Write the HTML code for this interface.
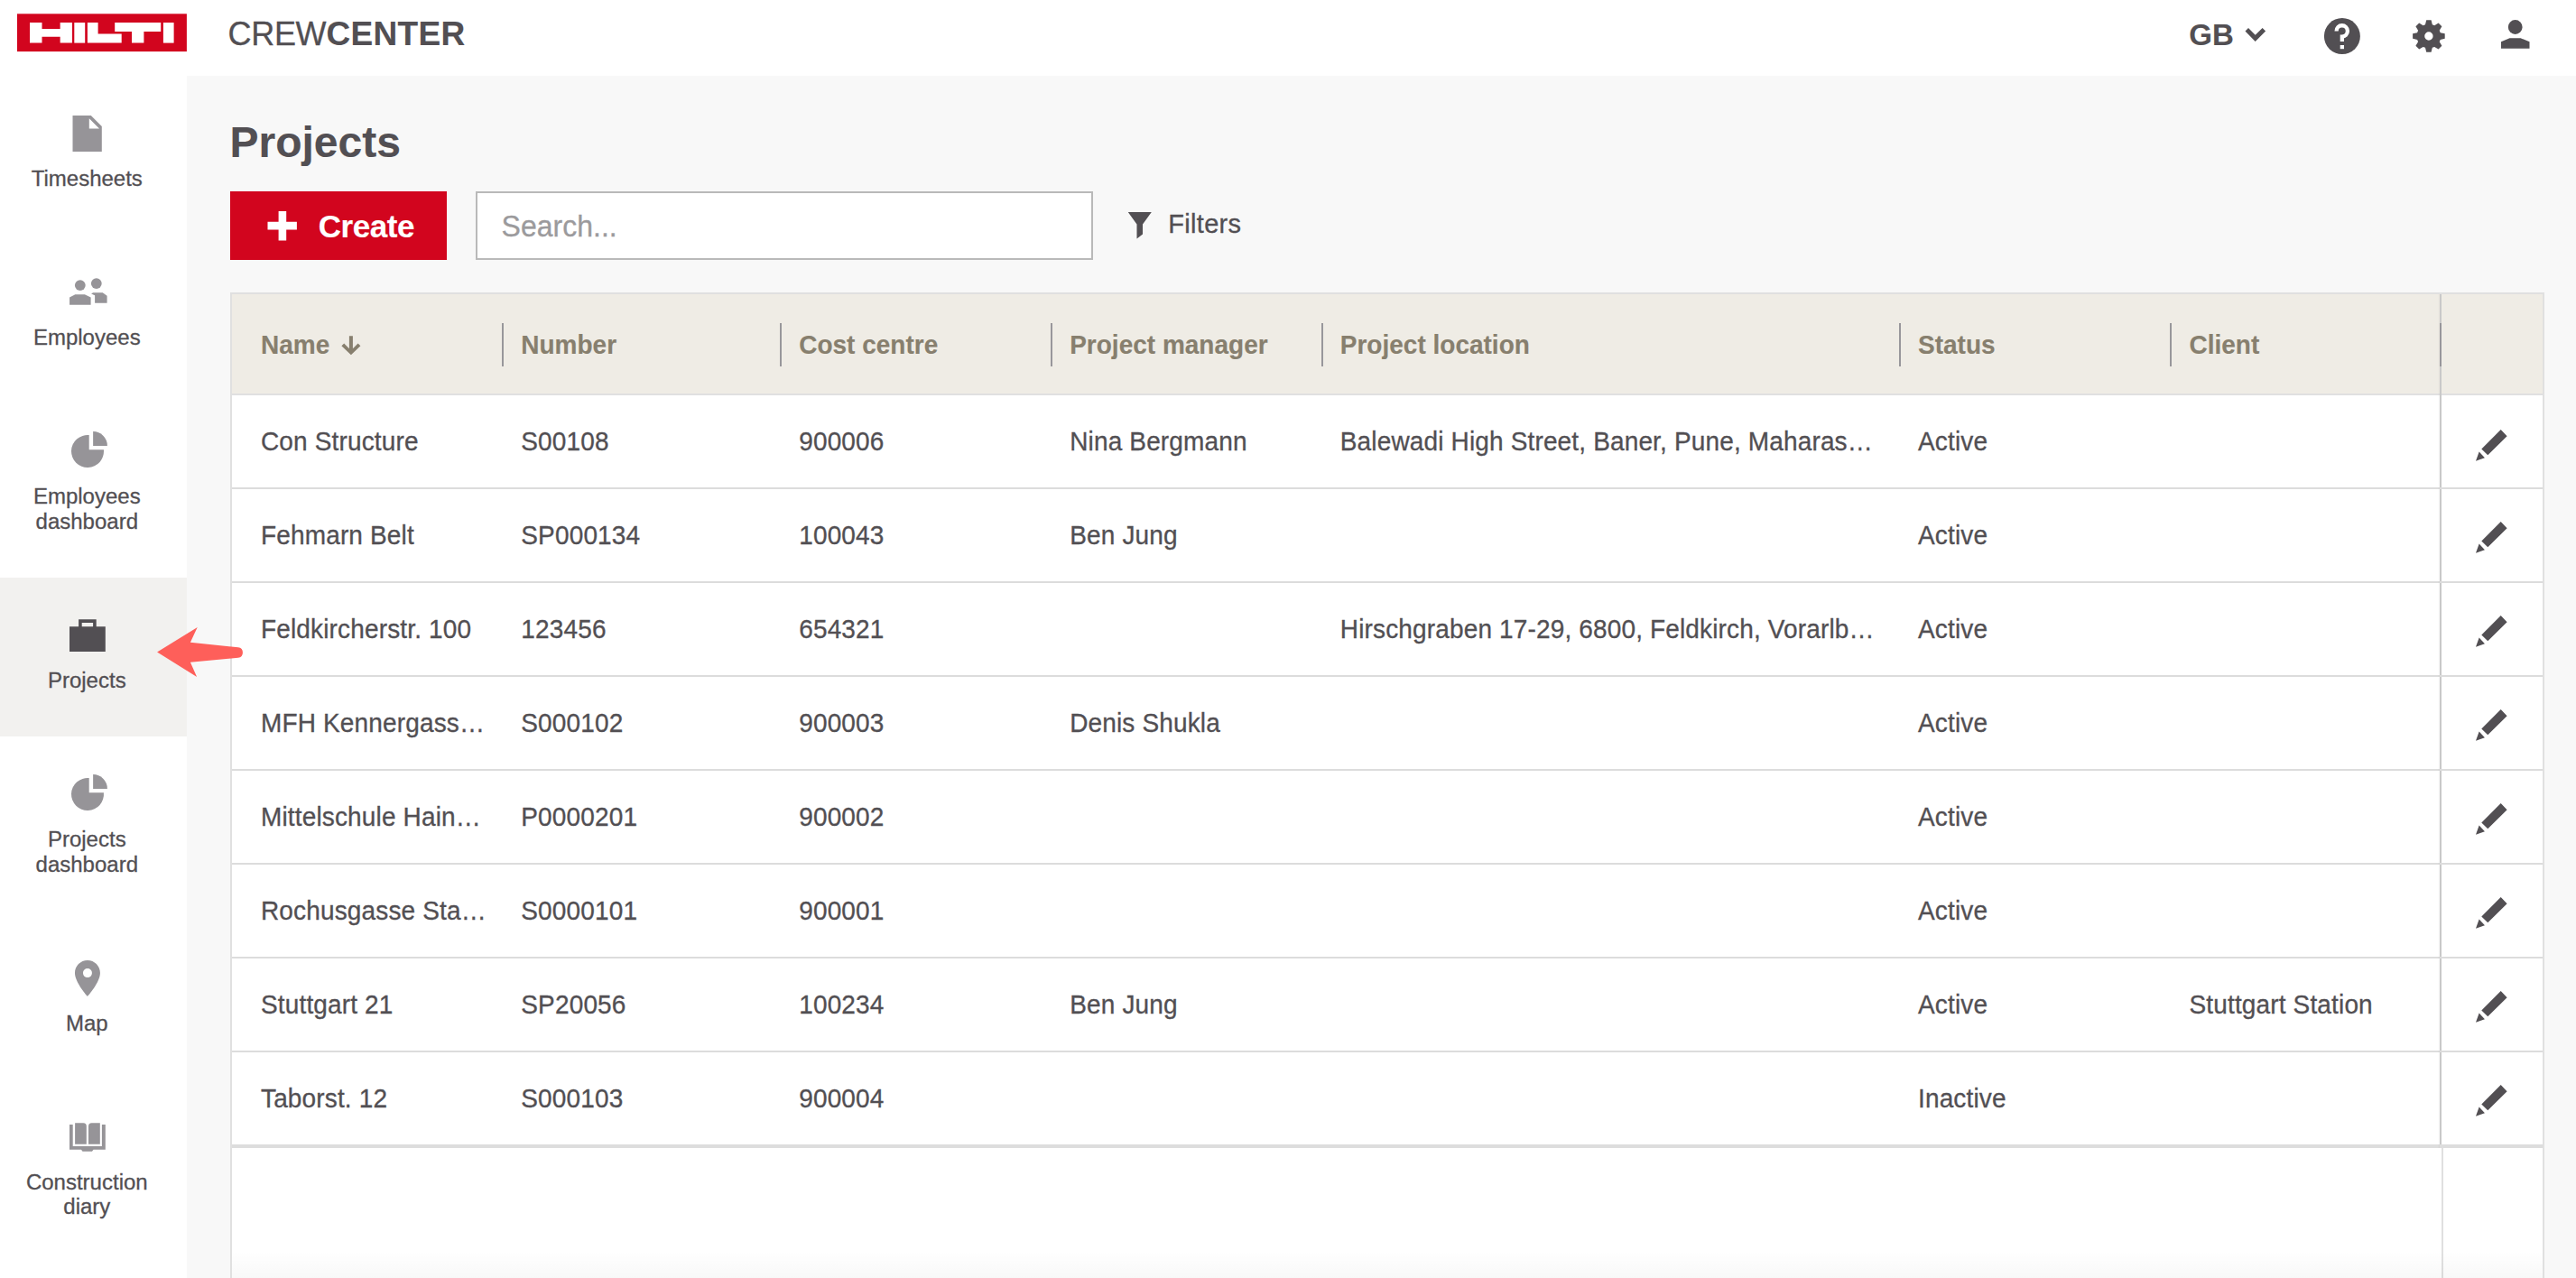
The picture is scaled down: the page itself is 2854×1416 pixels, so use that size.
<!DOCTYPE html>
<html><head><meta charset="utf-8"><title>Projects - CrewCenter</title>
<style>
html,body{margin:0;padding:0;}
body{width:2854px;height:1416px;position:relative;overflow:hidden;background:#f8f8f8;font-family:"Liberation Sans",sans-serif;}
.t{position:absolute;line-height:1;white-space:pre;-webkit-text-stroke:0.3px currentColor;}
.b{-webkit-text-stroke:0.15px currentColor;}
.r{position:absolute;}
svg{position:absolute;overflow:visible;}
</style></head><body>
<div class="r" style="left:0px;top:0px;width:2854px;height:84px;background:#ffffff;"></div>
<div class="r" style="left:0px;top:84px;width:207px;height:1332px;background:#ffffff;"></div>
<div class="r" style="left:0px;top:640px;width:207px;height:176px;background:#f2f1ef;"></div>
<svg style="left:0;top:0" width="2854" height="84" viewBox="0 0 2854 84">
<rect x="19" y="15.3" width="187.9" height="41.8" fill="#d2051e"/>
<g fill="#ffffff" transform="translate(19 15.3)">
<path d="M14 9.75H27.5V16.7H47.65V9.75H60.9V32.3H47.65V25.5H27.5V32.3H14Z"/>
<path d="M63.3 9.75H75.2V32.3H63.3Z"/>
<path d="M77.9 9.75H89.6V22.3H115.7V32.3H77.9Z"/>
<path d="M108.2 9.75H159.2V19.6H140.4V32.3H127V19.6H108.2Z"/>
<path d="M161.9 9.75H173.6V32.3H161.9Z"/>
</g>
<g fill="#524f53">
<polygon points="2487.5,34.6 2491,31.1 2498.7,38.8 2506.6,31.1 2510.1,34.6 2498.7,45.9"/>
<circle cx="2594.9" cy="40.1" r="20"/>
<circle cx="2786.7" cy="30" r="7.9"/>
<polygon points="2771,46.3 2780.5,42.3 2792.6,42.3 2802.5,46.3 2802.5,53.75 2771,53.75"/>
</g>
<path d="M2588.6 34.4 A6.15 6.15 0 1 1 2594.85 40.55 V45.9" fill="none" stroke="#fff" stroke-width="4.3"/>
<rect x="2592.7" y="50" width="4.3" height="4.2" fill="#fff"/>
<path d="M2686.98 27.24 L2688.21 22.25 L2693.59 22.25 L2694.82 27.24 L2697.19 28.22 L2701.58 25.56 L2705.39 29.37 L2702.73 33.76 L2703.71 36.13 L2708.70 37.36 L2708.70 42.74 L2703.71 43.97 L2702.73 46.34 L2705.39 50.73 L2701.58 54.54 L2697.19 51.88 L2694.82 52.86 L2693.59 57.85 L2688.21 57.85 L2686.98 52.86 L2684.61 51.88 L2680.22 54.54 L2676.41 50.73 L2679.07 46.34 L2678.09 43.97 L2673.10 42.74 L2673.10 37.36 L2678.09 36.13 L2679.07 33.76 L2676.41 29.37 L2680.22 25.56 L2684.61 28.22Z M2695.60 40.05 A4.7 4.7 0 1 0 2686.20 40.05 A4.7 4.7 0 1 0 2695.60 40.05Z" fill="#524f53" fill-rule="evenodd"/>
</svg>
<div class="t" style="left:252.50px;top:19.83px;font-size:36px;font-weight:400;color:#524f53;letter-spacing:-0.3px;">CREW</div>
<div class="t b" style="left:361.50px;top:18.98px;font-size:37px;font-weight:700;color:#524f53;letter-spacing:0.3px;">CENTER</div>
<div class="t b" style="left:2425.30px;top:21.97px;font-size:33px;font-weight:700;color:#524f53;">GB</div>
<div class="t" style="left:0;width:192.6px;text-align:center;top:185.93px;font-size:24px;color:#524f53;transform-origin:0 20.32px;transform:scaleY(1.03)">Timesheets</div>
<div class="t" style="left:0;width:192.6px;text-align:center;top:361.58px;font-size:24px;color:#524f53;transform-origin:0 20.32px;transform:scaleY(1.03)">Employees</div>
<div class="t" style="left:0;width:192.6px;text-align:center;top:537.98px;font-size:24px;color:#524f53;transform-origin:0 20.32px;transform:scaleY(1.03)">Employees</div>
<div class="t" style="left:0;width:192.6px;text-align:center;top:565.78px;font-size:24px;color:#524f53;transform-origin:0 20.32px;transform:scaleY(1.03)">dashboard</div>
<div class="t" style="left:0;width:192.6px;text-align:center;top:741.98px;font-size:24px;color:#524f53;transform-origin:0 20.32px;transform:scaleY(1.03)">Projects</div>
<div class="t" style="left:0;width:192.6px;text-align:center;top:917.68px;font-size:24px;color:#524f53;transform-origin:0 20.32px;transform:scaleY(1.03)">Projects</div>
<div class="t" style="left:0;width:192.6px;text-align:center;top:945.68px;font-size:24px;color:#524f53;transform-origin:0 20.32px;transform:scaleY(1.03)">dashboard</div>
<div class="t" style="left:0;width:192.6px;text-align:center;top:1122.48px;font-size:24px;color:#524f53;transform-origin:0 20.32px;transform:scaleY(1.03)">Map</div>
<div class="t" style="left:0;width:192.6px;text-align:center;top:1298.28px;font-size:24px;color:#524f53;transform-origin:0 20.32px;transform:scaleY(1.03)">Construction</div>
<div class="t" style="left:0;width:192.6px;text-align:center;top:1325.08px;font-size:24px;color:#524f53;transform-origin:0 20.32px;transform:scaleY(1.03)">diary</div>
<svg style="left:0;top:0" width="207" height="1416" viewBox="0 0 207 1416">
<path fill="#969498" fill-rule="evenodd" d="M80.5 128H100.8L112.8 140V168H80.5Z M98.8 131.25V142.5H110Z"/>
<g fill="#969498">
<circle cx="88.8" cy="316.1" r="5.9"/>
<circle cx="106.8" cy="314.1" r="5.9"/>
<polygon points="77.07,329.4 83.3,326.2 93.9,326.2 100.6,329.6 100.6,337.8 77.07,337.8"/>
<polygon points="101.07,325.4 103.2,324.2 113.7,324.2 118.6,327.7 118.6,335.7 105.1,335.7 105.1,327.3"/>
</g>
<g fill="#969498" transform="translate(0 0)"><path d="M98.7 482.08 A18 18 0 1 0 114.92 498.3 L98.7 498.3 Z"/><path d="M103.1 478.1 A15.8 15.8 0 0 1 118.9 493.9 L103.1 493.9 Z"/></g>
<g fill="#969498" transform="translate(0 380)"><path d="M98.7 482.08 A18 18 0 1 0 114.92 498.3 L98.7 498.3 Z"/><path d="M103.1 478.1 A15.8 15.8 0 0 1 118.9 493.9 L103.1 493.9 Z"/></g>
<path fill="#524f53" fill-rule="evenodd" d="M87.1 686.2H106.7V694.2H116.8V721.9H77V694.2H87.1Z M90.7 689.9V694.2H103.1V689.9Z"/>
<path fill="#969498" fill-rule="evenodd" d="M96.95 1064.1C89.2 1064.1 82.95 1070.35 82.95 1078.1C82.95 1088.6 96.95 1104.1 96.95 1104.1S110.95 1088.6 110.95 1078.1C110.95 1070.35 104.7 1064.1 96.95 1064.1Z M96.95 1073.1A5 5 0 1 0 96.95 1083.1A5 5 0 1 0 96.95 1073.1Z"/>
<g fill="#969498">
<path d="M77 1246.1H80.7V1270.1H112.9V1246.1H116.8V1273.8H103.5L102 1275.8H91.5L90 1273.8H77Z"/>
<path d="M83.1 1244.2H92.3Q95.8 1244.2 95.8 1247.7V1267.8H83.1Z"/>
<path d="M110.8 1244.2H101.5Q98 1244.2 98 1247.7V1267.8H110.8Z"/>
</g>
</svg>
<div class="t b" style="left:254.50px;top:133.57px;font-size:48px;font-weight:700;color:#524f53;">Projects</div>
<div class="r" style="left:255px;top:212px;width:240px;height:76px;background:#d2051e;"></div>
<svg style="left:0;top:0" width="500" height="300" viewBox="0 0 500 300"><path fill="#fff" d="M308.6 233.9H317.2V245.7H328.9V254.5H317.2V266.4H308.6V254.5H296.5V245.7H308.6Z"/></svg>
<div class="t b" style="left:352.80px;top:232.77px;font-size:35px;font-weight:700;color:#ffffff;letter-spacing:-0.45px;">Create</div>
<div class="r" style="left:527px;top:212px;width:684px;height:76px;background:#ffffff;box-sizing:border-box;border:2px solid #b9b9b9;"></div>
<div class="t" style="left:555.60px;top:235.11px;font-size:32px;font-weight:400;color:#9b9a9c;transform-origin:0 27.09px;transform:scaleY(1.06);">Search...</div>
<svg style="left:0;top:0" width="1300" height="300" viewBox="0 0 1300 300"><path fill="#524f53" d="M1249.8 234.9H1275.8L1266 248.6V259.4L1259.5 264.4V248.6Z"/></svg>
<div class="t" style="left:1294.30px;top:234.25px;font-size:29px;font-weight:400;color:#524f53;letter-spacing:0.3px;">Filters</div>
<div class="r" style="left:255px;top:324px;width:2564px;height:1092px;background:#ffffff;box-sizing:border-box;border:2px solid #e0e0e0;border-bottom:0;"></div>
<div class="r" style="left:257px;top:326px;width:2560px;height:110px;background:#efece5;"></div>
<div class="r" style="left:257px;top:436px;width:2560px;height:2px;background:#e0e0e0;"></div>
<div class="r" style="left:2703px;top:326px;width:2px;height:946px;background:#c9c9c9;"></div>
<div class="r" style="left:2705px;top:1272px;width:2px;height:144px;background:#e0e0e0;"></div>
<div class="r" style="left:556px;top:358px;width:2px;height:48px;background:#98979b;"></div>
<div class="r" style="left:864px;top:358px;width:2px;height:48px;background:#98979b;"></div>
<div class="r" style="left:1164px;top:358px;width:2px;height:48px;background:#98979b;"></div>
<div class="r" style="left:1464px;top:358px;width:2px;height:48px;background:#98979b;"></div>
<div class="r" style="left:2104px;top:358px;width:2px;height:48px;background:#98979b;"></div>
<div class="r" style="left:2404px;top:358px;width:2px;height:48px;background:#98979b;"></div>
<div class="r" style="left:2703px;top:358px;width:2px;height:48px;background:#98979b;"></div>
<div class="r" style="left:257px;top:540px;width:2560px;height:2px;background:#dcdcdc;"></div>
<div class="r" style="left:257px;top:644px;width:2560px;height:2px;background:#dcdcdc;"></div>
<div class="r" style="left:257px;top:748px;width:2560px;height:2px;background:#dcdcdc;"></div>
<div class="r" style="left:257px;top:852px;width:2560px;height:2px;background:#dcdcdc;"></div>
<div class="r" style="left:257px;top:956px;width:2560px;height:2px;background:#dcdcdc;"></div>
<div class="r" style="left:257px;top:1060px;width:2560px;height:2px;background:#dcdcdc;"></div>
<div class="r" style="left:257px;top:1164px;width:2560px;height:2px;background:#dcdcdc;"></div>
<div class="r" style="left:257px;top:1268px;width:2560px;height:4px;background:#dddddd;"></div>
<div class="t b" style="left:289.00px;top:368.50px;font-size:28px;font-weight:700;color:#877f6e;transform-origin:0 23.70px;transform:scaleY(1.04);">Name</div>
<div class="t b" style="left:577.30px;top:368.50px;font-size:28px;font-weight:700;color:#877f6e;transform-origin:0 23.70px;transform:scaleY(1.04);">Number</div>
<div class="t b" style="left:885.20px;top:368.50px;font-size:28px;font-weight:700;color:#877f6e;transform-origin:0 23.70px;transform:scaleY(1.04);">Cost centre</div>
<div class="t b" style="left:1185.20px;top:368.50px;font-size:28px;font-weight:700;color:#877f6e;transform-origin:0 23.70px;transform:scaleY(1.04);">Project manager</div>
<div class="t b" style="left:1484.80px;top:368.50px;font-size:28px;font-weight:700;color:#877f6e;transform-origin:0 23.70px;transform:scaleY(1.04);">Project location</div>
<div class="t b" style="left:2125.00px;top:368.50px;font-size:28px;font-weight:700;color:#877f6e;transform-origin:0 23.70px;transform:scaleY(1.04);">Status</div>
<div class="t b" style="left:2425.50px;top:368.50px;font-size:28px;font-weight:700;color:#877f6e;transform-origin:0 23.70px;transform:scaleY(1.04);">Client</div>
<svg style="left:0;top:0" width="400" height="400" viewBox="0 0 400 400"><path fill="#877f6e" d="M386.9 372.3H390.9V386.2L396.6 380.5L399.4 383.3L388.9 393.3L378.4 383.3L381.2 380.5L386.9 386.2Z"/></svg>
<div class="t" style="left:289.00px;top:475.70px;font-size:28px;font-weight:400;color:#524f53;letter-spacing:0.15px;transform-origin:0 23.70px;transform:scaleY(1.05);">Con Structure</div>
<div class="t" style="left:577.30px;top:475.70px;font-size:28px;font-weight:400;color:#524f53;letter-spacing:0.15px;transform-origin:0 23.70px;transform:scaleY(1.05);">S00108</div>
<div class="t" style="left:885.20px;top:475.70px;font-size:28px;font-weight:400;color:#524f53;letter-spacing:0.15px;transform-origin:0 23.70px;transform:scaleY(1.05);">900006</div>
<div class="t" style="left:1185.20px;top:475.70px;font-size:28px;font-weight:400;color:#524f53;letter-spacing:0.15px;transform-origin:0 23.70px;transform:scaleY(1.05);">Nina Bergmann</div>
<div class="t" style="left:1484.80px;top:475.70px;font-size:28px;font-weight:400;color:#524f53;letter-spacing:0.15px;transform-origin:0 23.70px;transform:scaleY(1.05);">Balewadi High Street, Baner, Pune, Maharas…</div>
<div class="t" style="left:2125.00px;top:475.70px;font-size:28px;font-weight:400;color:#524f53;letter-spacing:0.15px;transform-origin:0 23.70px;transform:scaleY(1.05);">Active</div>
<svg style="left:2742.6px;top:475.80px" width="35" height="35" viewBox="0 0 34.5 34.5" fill="#524f53"><path d="M27.3 0L34.1 7.1L13.1 27.9L6.2 21.2Z M0 34.3L3.6 24.2L9.8 30.7Z"/></svg>
<div class="t" style="left:289.00px;top:579.70px;font-size:28px;font-weight:400;color:#524f53;letter-spacing:0.15px;transform-origin:0 23.70px;transform:scaleY(1.05);">Fehmarn Belt</div>
<div class="t" style="left:577.30px;top:579.70px;font-size:28px;font-weight:400;color:#524f53;letter-spacing:0.15px;transform-origin:0 23.70px;transform:scaleY(1.05);">SP000134</div>
<div class="t" style="left:885.20px;top:579.70px;font-size:28px;font-weight:400;color:#524f53;letter-spacing:0.15px;transform-origin:0 23.70px;transform:scaleY(1.05);">100043</div>
<div class="t" style="left:1185.20px;top:579.70px;font-size:28px;font-weight:400;color:#524f53;letter-spacing:0.15px;transform-origin:0 23.70px;transform:scaleY(1.05);">Ben Jung</div>
<div class="t" style="left:2125.00px;top:579.70px;font-size:28px;font-weight:400;color:#524f53;letter-spacing:0.15px;transform-origin:0 23.70px;transform:scaleY(1.05);">Active</div>
<svg style="left:2742.6px;top:578.10px" width="35" height="35" viewBox="0 0 34.5 34.5" fill="#524f53"><path d="M27.3 0L34.1 7.1L13.1 27.9L6.2 21.2Z M0 34.3L3.6 24.2L9.8 30.7Z"/></svg>
<div class="t" style="left:289.00px;top:683.70px;font-size:28px;font-weight:400;color:#524f53;letter-spacing:0.15px;transform-origin:0 23.70px;transform:scaleY(1.05);">Feldkircherstr. 100</div>
<div class="t" style="left:577.30px;top:683.70px;font-size:28px;font-weight:400;color:#524f53;letter-spacing:0.15px;transform-origin:0 23.70px;transform:scaleY(1.05);">123456</div>
<div class="t" style="left:885.20px;top:683.70px;font-size:28px;font-weight:400;color:#524f53;letter-spacing:0.15px;transform-origin:0 23.70px;transform:scaleY(1.05);">654321</div>
<div class="t" style="left:1484.80px;top:683.70px;font-size:28px;font-weight:400;color:#524f53;letter-spacing:0.15px;transform-origin:0 23.70px;transform:scaleY(1.05);">Hirschgraben 17-29, 6800, Feldkirch, Vorarlb…</div>
<div class="t" style="left:2125.00px;top:683.70px;font-size:28px;font-weight:400;color:#524f53;letter-spacing:0.15px;transform-origin:0 23.70px;transform:scaleY(1.05);">Active</div>
<svg style="left:2742.6px;top:682.10px" width="35" height="35" viewBox="0 0 34.5 34.5" fill="#524f53"><path d="M27.3 0L34.1 7.1L13.1 27.9L6.2 21.2Z M0 34.3L3.6 24.2L9.8 30.7Z"/></svg>
<div class="t" style="left:289.00px;top:787.70px;font-size:28px;font-weight:400;color:#524f53;letter-spacing:0.15px;transform-origin:0 23.70px;transform:scaleY(1.05);">MFH Kennergass…</div>
<div class="t" style="left:577.30px;top:787.70px;font-size:28px;font-weight:400;color:#524f53;letter-spacing:0.15px;transform-origin:0 23.70px;transform:scaleY(1.05);">S000102</div>
<div class="t" style="left:885.20px;top:787.70px;font-size:28px;font-weight:400;color:#524f53;letter-spacing:0.15px;transform-origin:0 23.70px;transform:scaleY(1.05);">900003</div>
<div class="t" style="left:1185.20px;top:787.70px;font-size:28px;font-weight:400;color:#524f53;letter-spacing:0.15px;transform-origin:0 23.70px;transform:scaleY(1.05);">Denis Shukla</div>
<div class="t" style="left:2125.00px;top:787.70px;font-size:28px;font-weight:400;color:#524f53;letter-spacing:0.15px;transform-origin:0 23.70px;transform:scaleY(1.05);">Active</div>
<svg style="left:2742.6px;top:786.10px" width="35" height="35" viewBox="0 0 34.5 34.5" fill="#524f53"><path d="M27.3 0L34.1 7.1L13.1 27.9L6.2 21.2Z M0 34.3L3.6 24.2L9.8 30.7Z"/></svg>
<div class="t" style="left:289.00px;top:891.70px;font-size:28px;font-weight:400;color:#524f53;letter-spacing:0.15px;transform-origin:0 23.70px;transform:scaleY(1.05);">Mittelschule Hain…</div>
<div class="t" style="left:577.30px;top:891.70px;font-size:28px;font-weight:400;color:#524f53;letter-spacing:0.15px;transform-origin:0 23.70px;transform:scaleY(1.05);">P0000201</div>
<div class="t" style="left:885.20px;top:891.70px;font-size:28px;font-weight:400;color:#524f53;letter-spacing:0.15px;transform-origin:0 23.70px;transform:scaleY(1.05);">900002</div>
<div class="t" style="left:2125.00px;top:891.70px;font-size:28px;font-weight:400;color:#524f53;letter-spacing:0.15px;transform-origin:0 23.70px;transform:scaleY(1.05);">Active</div>
<svg style="left:2742.6px;top:890.10px" width="35" height="35" viewBox="0 0 34.5 34.5" fill="#524f53"><path d="M27.3 0L34.1 7.1L13.1 27.9L6.2 21.2Z M0 34.3L3.6 24.2L9.8 30.7Z"/></svg>
<div class="t" style="left:289.00px;top:995.70px;font-size:28px;font-weight:400;color:#524f53;letter-spacing:0.15px;transform-origin:0 23.70px;transform:scaleY(1.05);">Rochusgasse Sta…</div>
<div class="t" style="left:577.30px;top:995.70px;font-size:28px;font-weight:400;color:#524f53;letter-spacing:0.15px;transform-origin:0 23.70px;transform:scaleY(1.05);">S0000101</div>
<div class="t" style="left:885.20px;top:995.70px;font-size:28px;font-weight:400;color:#524f53;letter-spacing:0.15px;transform-origin:0 23.70px;transform:scaleY(1.05);">900001</div>
<div class="t" style="left:2125.00px;top:995.70px;font-size:28px;font-weight:400;color:#524f53;letter-spacing:0.15px;transform-origin:0 23.70px;transform:scaleY(1.05);">Active</div>
<svg style="left:2742.6px;top:994.10px" width="35" height="35" viewBox="0 0 34.5 34.5" fill="#524f53"><path d="M27.3 0L34.1 7.1L13.1 27.9L6.2 21.2Z M0 34.3L3.6 24.2L9.8 30.7Z"/></svg>
<div class="t" style="left:289.00px;top:1099.70px;font-size:28px;font-weight:400;color:#524f53;letter-spacing:0.15px;transform-origin:0 23.70px;transform:scaleY(1.05);">Stuttgart 21</div>
<div class="t" style="left:577.30px;top:1099.70px;font-size:28px;font-weight:400;color:#524f53;letter-spacing:0.15px;transform-origin:0 23.70px;transform:scaleY(1.05);">SP20056</div>
<div class="t" style="left:885.20px;top:1099.70px;font-size:28px;font-weight:400;color:#524f53;letter-spacing:0.15px;transform-origin:0 23.70px;transform:scaleY(1.05);">100234</div>
<div class="t" style="left:1185.20px;top:1099.70px;font-size:28px;font-weight:400;color:#524f53;letter-spacing:0.15px;transform-origin:0 23.70px;transform:scaleY(1.05);">Ben Jung</div>
<div class="t" style="left:2125.00px;top:1099.70px;font-size:28px;font-weight:400;color:#524f53;letter-spacing:0.15px;transform-origin:0 23.70px;transform:scaleY(1.05);">Active</div>
<div class="t" style="left:2425.50px;top:1099.70px;font-size:28px;font-weight:400;color:#524f53;letter-spacing:0.15px;transform-origin:0 23.70px;transform:scaleY(1.05);">Stuttgart Station</div>
<svg style="left:2742.6px;top:1098.10px" width="35" height="35" viewBox="0 0 34.5 34.5" fill="#524f53"><path d="M27.3 0L34.1 7.1L13.1 27.9L6.2 21.2Z M0 34.3L3.6 24.2L9.8 30.7Z"/></svg>
<div class="t" style="left:289.00px;top:1203.70px;font-size:28px;font-weight:400;color:#524f53;letter-spacing:0.15px;transform-origin:0 23.70px;transform:scaleY(1.05);">Taborst. 12</div>
<div class="t" style="left:577.30px;top:1203.70px;font-size:28px;font-weight:400;color:#524f53;letter-spacing:0.15px;transform-origin:0 23.70px;transform:scaleY(1.05);">S000103</div>
<div class="t" style="left:885.20px;top:1203.70px;font-size:28px;font-weight:400;color:#524f53;letter-spacing:0.15px;transform-origin:0 23.70px;transform:scaleY(1.05);">900004</div>
<div class="t" style="left:2125.00px;top:1203.70px;font-size:28px;font-weight:400;color:#524f53;letter-spacing:0.15px;transform-origin:0 23.70px;transform:scaleY(1.05);">Inactive</div>
<svg style="left:2742.6px;top:1202.10px" width="35" height="35" viewBox="0 0 34.5 34.5" fill="#524f53"><path d="M27.3 0L34.1 7.1L13.1 27.9L6.2 21.2Z M0 34.3L3.6 24.2L9.8 30.7Z"/></svg>
<div class="r" style="left:2701px;top:326px;width:2px;height:946px;background:linear-gradient(to right, rgba(0,0,0,0), rgba(0,0,0,0.035));"></div>
<div class="r" style="left:257px;top:1386px;width:2560px;height:30px;background:linear-gradient(to bottom, rgba(0,0,0,0), rgba(0,0,0,0.028));"></div>
<svg style="left:0;top:0" width="300" height="800" viewBox="0 0 300 800"><path fill="#fe5f5a" d="M174.1 722.5L218.7 695L210.9 711.8L263.9 717.3A5.8 5.8 0 0 1 263.9 728.8L210.9 733.8L218.1 750Z"/></svg>
</body></html>
